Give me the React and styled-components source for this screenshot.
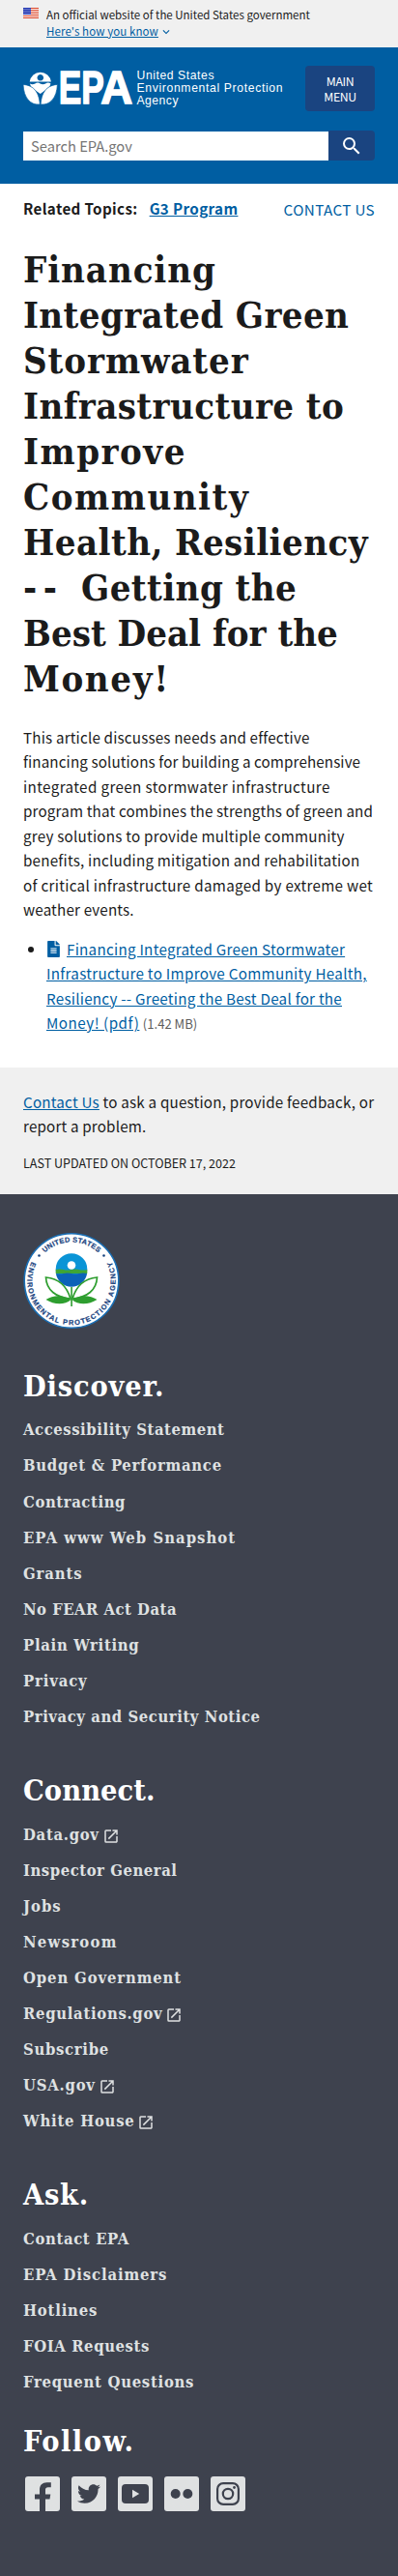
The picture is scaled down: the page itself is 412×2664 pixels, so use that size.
import React from "react";
import styled, { createGlobalStyle } from "styled-components";
import { MdSearch, MdLaunch, MdExpandMore } from "react-icons/md";
import { FaTwitter, FaFileAlt } from "react-icons/fa";

const sans = `"Noto Sans CJK SC", "Noto Sans", sans-serif`;
const serif = `"DejaVu Serif Condensed", "DejaVu Serif", serif`;

const GlobalStyle = createGlobalStyle`
  * { box-sizing: border-box; }
  body { margin: 0; background: #fff; color: #1b1b1b; font-family: ${sans}; font-size: 15.2px; line-height: 25.44px; }
  a { color: #005ea2; }
  svg { display: block; }
`;

const Page = styled.div`
  width: 412px;
  min-height: 2664px;
  display: flex;
  flex-direction: column;
`;

const Banner = styled.section`
  height: 49px;
  padding: 7px 24px 0;
  display: flex;
  gap: 8px;
  background: #f0f0f0;
  font-size: 11.5px;
  line-height: 16px;
  white-space: nowrap;
`;
const FlagIcon = styled.svg`
  width: 16px;
  height: 11px;
  margin-top: 1px;
`;
const BannerLink = styled.a`
  display: flex;
  align-items: center;
  gap: 1px;
  text-decoration: none;
  letter-spacing: 0.1px;
  span { text-decoration: underline; }
  svg { margin-top: 3px; }
`;

const Header = styled.header`
  height: 141px;
  padding: 19px 24px 0;
  background: #005ea2;
`;
const HeaderTop = styled.div`
  display: flex;
  justify-content: space-between;
  align-items: flex-start;
`;
const Logo = styled.svg`
  width: 276px;
  height: 40px;
  margin-top: 4px;
`;
const MenuButton = styled.button`
  width: 72px;
  height: 47px;
  padding: 0;
  border: 0;
  border-radius: 4px;
  background: #1a4480;
  color: #fff;
  font: 12.3px/16px ${sans};
  letter-spacing: -0.4px;
  text-transform: uppercase;
`;
const Search = styled.form`
  display: flex;
  height: 31px;
  margin-top: 20px;
`;
const SearchInput = styled.input`
  flex: 1;
  min-width: 0;
  height: 30px;
  margin-top: 1px;
  padding: 0 8px;
  border: 0;
  background: #fff;
  font: 14.7px/30px ${sans};
  &::placeholder { color: #757575; opacity: 1; }
`;
const SearchButton = styled.button`
  width: 48px;
  padding: 0;
  border: 0;
  border-radius: 0 4px 4px 0;
  background: #1a4480;
  color: #fff;
  display: grid;
  place-items: center;
`;

const Main = styled.main`
  height: 914px;
  padding: 12.5px 24px 0;
`;
const Topics = styled.div`
  display: flex;
  justify-content: space-between;
  white-space: nowrap;
`;
const Related = styled.div`
  display: flex;
  gap: 12px;
  font-weight: 700;
  letter-spacing: 0.36px;
`;
const ContactLink = styled.a`
  margin-top: 1px;
  text-decoration: none;
  text-transform: uppercase;
  letter-spacing: 0.38px;
`;
const Title = styled.h1`
  margin: 27.2px 0 24.4px;
  font: 700 38px/46.93px ${serif};
  white-space: nowrap;
`;
const Line = styled.span`
  display: ${(p) => (p.$inline ? "inline" : "block")};
  letter-spacing: ${(p) => p.$spacing || 0}px;
`;
const Paragraph = styled.p`
  margin: 0;
  white-space: nowrap;
`;
const FileList = styled.ul`
  margin: 15.5px 0 0;
  padding-left: 24px;
  white-space: nowrap;
`;
const FileMark = styled(FaFileAlt)`
  display: inline-block;
  width: 15px;
  height: 17px;
  margin-right: 6px;
  vertical-align: -2px;
  color: #005ea2;
`;
const FileSize = styled.span`
  color: #5c5c5c;
  font-size: 13.1px;
`;

const PageInfo = styled.section`
  height: 131px;
  padding: 22.7px 24px 0;
  background: #f0f0f0;
`;
const Updated = styled.p`
  margin: 15.3px 0 0;
  font-size: 12.55px;
  line-height: 20px;
  text-transform: uppercase;
`;

const Footer = styled.footer`
  flex: 1;
  padding: 39px 24px 0;
  background: #3e424e;
  font-family: ${serif};
  font-weight: 700;
`;
const Seal = styled.svg`
  width: 100px;
  height: 102px;
  margin-bottom: 38.9px;
`;
const FooterSection = styled.section`
  margin-bottom: ${(p) => p.$gap ?? 38.9}px;
`;
const FooterTitle = styled.h2`
  margin: 0 0 ${(p) => p.$gap ?? 9.5}px;
  font-size: 30.4px;
  line-height: 36px;
  color: #fff;
  letter-spacing: ${(p) => p.$spacing || 0}px;
`;
const LinkList = styled.ul`
  margin: 0;
  padding: 0;
  list-style: none;
`;
const LinkItem = styled.li`
  height: 37.1px;
  display: flex;
  align-items: center;
  gap: 3px;
  font-size: 16.5px;
  line-height: 37.1px;
  color: #dfe1e2;
  letter-spacing: ${(p) => p.$spacing || 0}px;
  svg { margin-top: 3px; }
`;
const SocialRow = styled.div`
  display: flex;
  margin-left: -4px;
`;
const SocialIcon = styled.svg`
  width: 48px;
  height: 48px;
`;

const titleLines = [
  ["Financing", 0.9],
  ["Integrated Green", 0.37],
  ["Stormwater", 0.9],
  ["Infrastructure to", 0.4],
  ["Improve", 1.49],
  ["Community", 1.5],
  ["Health, Resiliency", 0.43],
  ["Getting the", 0.4, "-- "],
  ["Best Deal for the", 0],
  ["Money!", 1.6],
];

const introLines = [
  ["This article discusses needs and effective", 0.18],
  ["financing solutions for building a comprehensive", 0.11],
  ["integrated green stormwater infrastructure", 0.38],
  ["program that combines the strengths of green and", 0.16],
  ["grey solutions to provide multiple community", 0.23],
  ["benefits, including mitigation and rehabilitation", 0.22],
  ["of critical infrastructure damaged by extreme wet", 0.3],
  ["weather events.", 0.17],
];

const fileLines = [
  ["Financing Integrated Green Stormwater", 0.26],
  ["Infrastructure to Improve Community Health,", 0.3],
  ["Resiliency -- Greeting the Best Deal for the", 0.25],
  ["Money! (pdf)", 0.5],
];

const sections = [
  {
    title: "Discover.",
    spacing: 0.84,
    links: [
      ["Accessibility Statement", 0.56],
      ["Budget & Performance", 0.75],
      ["Contracting", 0.59],
      ["EPA www Web Snapshot", 1.05],
      ["Grants", 0.9],
      ["No FEAR Act Data", 0.5],
      ["Plain Writing", 0.72],
      ["Privacy", 0.85],
      ["Privacy and Security Notice", 0.57],
    ],
  },
  {
    title: "Connect.",
    spacing: 0.08,
    links: [
      ["Data.gov", 0.7, true],
      ["Inspector General", 0.55],
      ["Jobs", 1],
      ["Newsroom", 1.28],
      ["Open Government", 0.88],
      ["Regulations.gov", 0.7, true],
      ["Subscribe", 0.7],
      ["USA.gov", 0.78, true],
      ["White House", 0.76, true],
    ],
  },
  {
    title: "Ask.",
    spacing: 0.71,
    gap: 23.5,
    links: [
      ["Contact EPA", 0.64],
      ["EPA Disclaimers", 0.88],
      ["Hotlines", 0.81],
      ["FOIA Requests", 0.61],
      ["Frequent Questions", 0.73],
    ],
  },
];

function Flag() {
  return (
    <FlagIcon viewBox="0 0 16 11">
      <rect width="16" height="11" fill="#fff" />
      {[0, 2, 4, 6, 8, 10].map((y) => (
        <rect key={y} y={y} width="16" height="1" fill="#db3e1f" />
      ))}
      <rect width="8" height="7" fill="#1e33b1" />
      {[1, 3, 5].map((y) =>
        [1, 3, 5, 7].map((x) => <circle key={`${x}${y}`} cx={x} cy={y + 0.4} r="0.5" fill="#fff" />)
      )}
    </FlagIcon>
  );
}

function EpaLogo() {
  return (
    <Logo viewBox="24 72 276 40" role="img" aria-label="EPA">
      <g fill="#fff">
        <path fillRule="evenodd" d="M30.7 84.6a11.2 11.4 0 0 1 22.2 0zM41.8 77a3.3 3.3 0 1 0 .01 0z" />
        <path d="M30.9 86.4q2.7 1.6 5.4 0t5.4 0t5.4 0t5.4 0a11.2 9 0 0 1-4 5.9l-6.8 4.6l-6.8-4.6a11 9 0 0 1-4-5.9z" />
        <path d="M24 87.4C33 88.2 40.3 93 41.3 108C31.5 109 24.5 101 24 87.4z" stroke="#005ea2" strokeWidth=".7" />
        <path d="M59.4 87.4C50.4 88.2 43.1 93 42.1 108C51.9 109 58.9 101 59.4 87.4z" stroke="#005ea2" strokeWidth=".7" />
        <g fontFamily="Liberation Sans, sans-serif" fontWeight="700" fontSize="48" stroke="#fff" strokeWidth="1.5">
          <text x="60.7" y="107.3" textLength="47" lengthAdjust="spacingAndGlyphs">EP</text>
          <text x="104.3" y="107.3" textLength="33" lengthAdjust="spacingAndGlyphs">A</text>
        </g>
        <g fontFamily="Liberation Sans, sans-serif" fontSize="12.2">
          <text x="141.5" y="82.4" textLength="80">United States</text>
          <text x="141.5" y="95.1" textLength="151">Environmental Protection</text>
          <text x="141.5" y="107.7" textLength="43">Agency</text>
        </g>
      </g>
    </Logo>
  );
}

function EpaSeal() {
  return (
    <Seal viewBox="0 0 100 102">
      <circle cx="50" cy="50.5" r="48.8" fill="#fff" stroke="#1a6fb5" strokeWidth="1.6" />
      <defs>
        <path id="seal-top" d="M10 50.5a40 40 0 0 1 80 0" />
        <path id="seal-bottom" d="M17.7 18.2A45.7 45.7 0 1 0 82.3 18.2" />
      </defs>
      <g fontFamily="Liberation Sans, sans-serif" fontSize="7.4" fill="#1a4480" stroke="#1a4480" strokeWidth=".2">
        <text><textPath href="#seal-top" startOffset="50%" textAnchor="middle" textLength="61">UNITED STATES</textPath></text>
        <text><textPath href="#seal-bottom" startOffset="50%" textAnchor="middle" textLength="184">ENVIRONMENTAL PROTECTION AGENCY</textPath></text>
      </g>
      <circle cx="16.5" cy="24.5" r="1.3" fill="#1a4480" />
      <circle cx="83.5" cy="24.5" r="1.3" fill="#1a4480" />
      <circle cx="50" cy="38.5" r="16.3" fill="#0a94d6" />
      <path d="M33.7 39q4 -1 8 0t8 0t8 0t8.6 0v4h-32.6z" fill="#3fa535" />
      <path d="M33.9 43q4 1 8 0t8 0t8 0t8.2 0a16.3 16.3 0 0 1-32.2 0z" fill="#0b62b8" />
      <circle cx="50" cy="34.5" r="4.3" fill="#fff" />
      <g fill="#fff" stroke="#2e9e2f" strokeWidth="1.7">
        <path d="M49 69C45 56 36 48 23.5 47C24 60 34 68 49 69z" />
        <path d="M51 69C55 56 64 48 76.5 47C76 60 66 68 51 69z" />
      </g>
      <path d="M49.3 57h1.6v20h-1.6zM49.5 70C40 64 30 66 23.5 70C32 75.5 43 76 49.5 70zM50.5 70C60 64 70 66 76.5 70C68 75.5 57 76 50.5 70z" fill="#2e9e2f" />
    </Seal>
  );
}

const glyph = "#3e424e";
const socialGlyphs = {
  facebook: (
    <path d="M21 42V29.5h-5v-5h5v-4.3c0-5.2 2.8-7.9 7.6-7.9h4.2v4.9h-2.9c-2.2 0-2.9 1.1-2.9 2.9v4.4h5.3l-.8 5H27V42z" fill={glyph} />
  ),
  twitter: <FaTwitter x="12" y="12" size={24} color={glyph} />,
  youtube: (
    <>
      <rect x="10" y="14" width="28" height="20" rx="4" fill={glyph} />
      <path d="M21 19.7v8.6l7.2-4.3z" fill="#dfe1e2" />
    </>
  ),
  flickr: (
    <>
      <circle cx="17.7" cy="24" r="5" fill={glyph} />
      <circle cx="30.3" cy="24" r="5" fill={glyph} />
    </>
  ),
  instagram: (
    <g fill="none" stroke={glyph} strokeWidth="2.2">
      <rect x="13.1" y="13.1" width="21.8" height="21.8" rx="6" />
      <circle cx="24" cy="24" r="5.2" />
      <circle cx="30.5" cy="17.5" r="1.4" fill={glyph} stroke="none" />
    </g>
  ),
};

export default function App() {
  return (
    <Page>
      <GlobalStyle />
      <Banner>
        <Flag />
        <div>
          An official website of the United States government
          <BannerLink href="#">
            <span>Here's how you know</span>
            <MdExpandMore size={14} />
          </BannerLink>
        </div>
      </Banner>
      <Header>
        <HeaderTop>
          <EpaLogo />
          <MenuButton>Main<br />Menu</MenuButton>
        </HeaderTop>
        <Search>
          <SearchInput placeholder="Search EPA.gov" />
          <SearchButton type="button" aria-label="Search"><MdSearch size={24} /></SearchButton>
        </Search>
      </Header>
      <Main>
        <Topics>
          <Related>
            <span>Related Topics:</span>
            <a href="#">G3 Program</a>
          </Related>
          <ContactLink href="#">Contact Us</ContactLink>
        </Topics>
        <Title>
          {titleLines.map(([text, spacing, dashes]) => (
            <Line key={text} $spacing={spacing}>
              {dashes && <Line $inline $spacing={6.6}>{dashes}</Line>}
              {text}
            </Line>
          ))}
        </Title>
        <Paragraph>
          {introLines.map(([text, spacing]) => (
            <Line key={text} $spacing={spacing}>{text}</Line>
          ))}
        </Paragraph>
        <FileList>
          <li>
            <FileMark />
            <a href="#">
              {fileLines.map(([text, spacing], i) => (
                <React.Fragment key={text}>
                  {i > 0 && <br />}
                  <Line $inline $spacing={spacing}>{text}</Line>
                </React.Fragment>
              ))}
            </a>{" "}
            <FileSize>(1.42 MB)</FileSize>
          </li>
        </FileList>
      </Main>
      <PageInfo>
        <Paragraph>
          <Line $spacing={0.21}>
            <a href="#">Contact Us</a> to ask a question, provide feedback, or
          </Line>
          <Line $spacing={0.17}>report a problem.</Line>
        </Paragraph>
        <Updated>Last updated on October 17, 2022</Updated>
      </PageInfo>
      <Footer>
        <EpaSeal />
        {sections.map(({ title, spacing: titleSpacing, gap, links }) => (
          <FooterSection key={title} $gap={gap}>
            <FooterTitle $spacing={titleSpacing}>{title}</FooterTitle>
            <LinkList>
              {links.map(([text, spacing, external]) => (
                <LinkItem key={text} $spacing={spacing}>
                  {text}
                  {external && <MdLaunch size={18} />}
                </LinkItem>
              ))}
            </LinkList>
          </FooterSection>
        ))}
        <FooterTitle $gap={13} $spacing={1.5}>Follow.</FooterTitle>
        <SocialRow>
          {Object.entries(socialGlyphs).map(([name, drawing]) => (
            <SocialIcon key={name} viewBox="0 0 48 48" role="img" aria-label={name}>
              <rect x="6" y="6" width="36" height="36" rx="3" fill="#dfe1e2" />
              {drawing}
            </SocialIcon>
          ))}
        </SocialRow>
      </Footer>
    </Page>
  );
}
